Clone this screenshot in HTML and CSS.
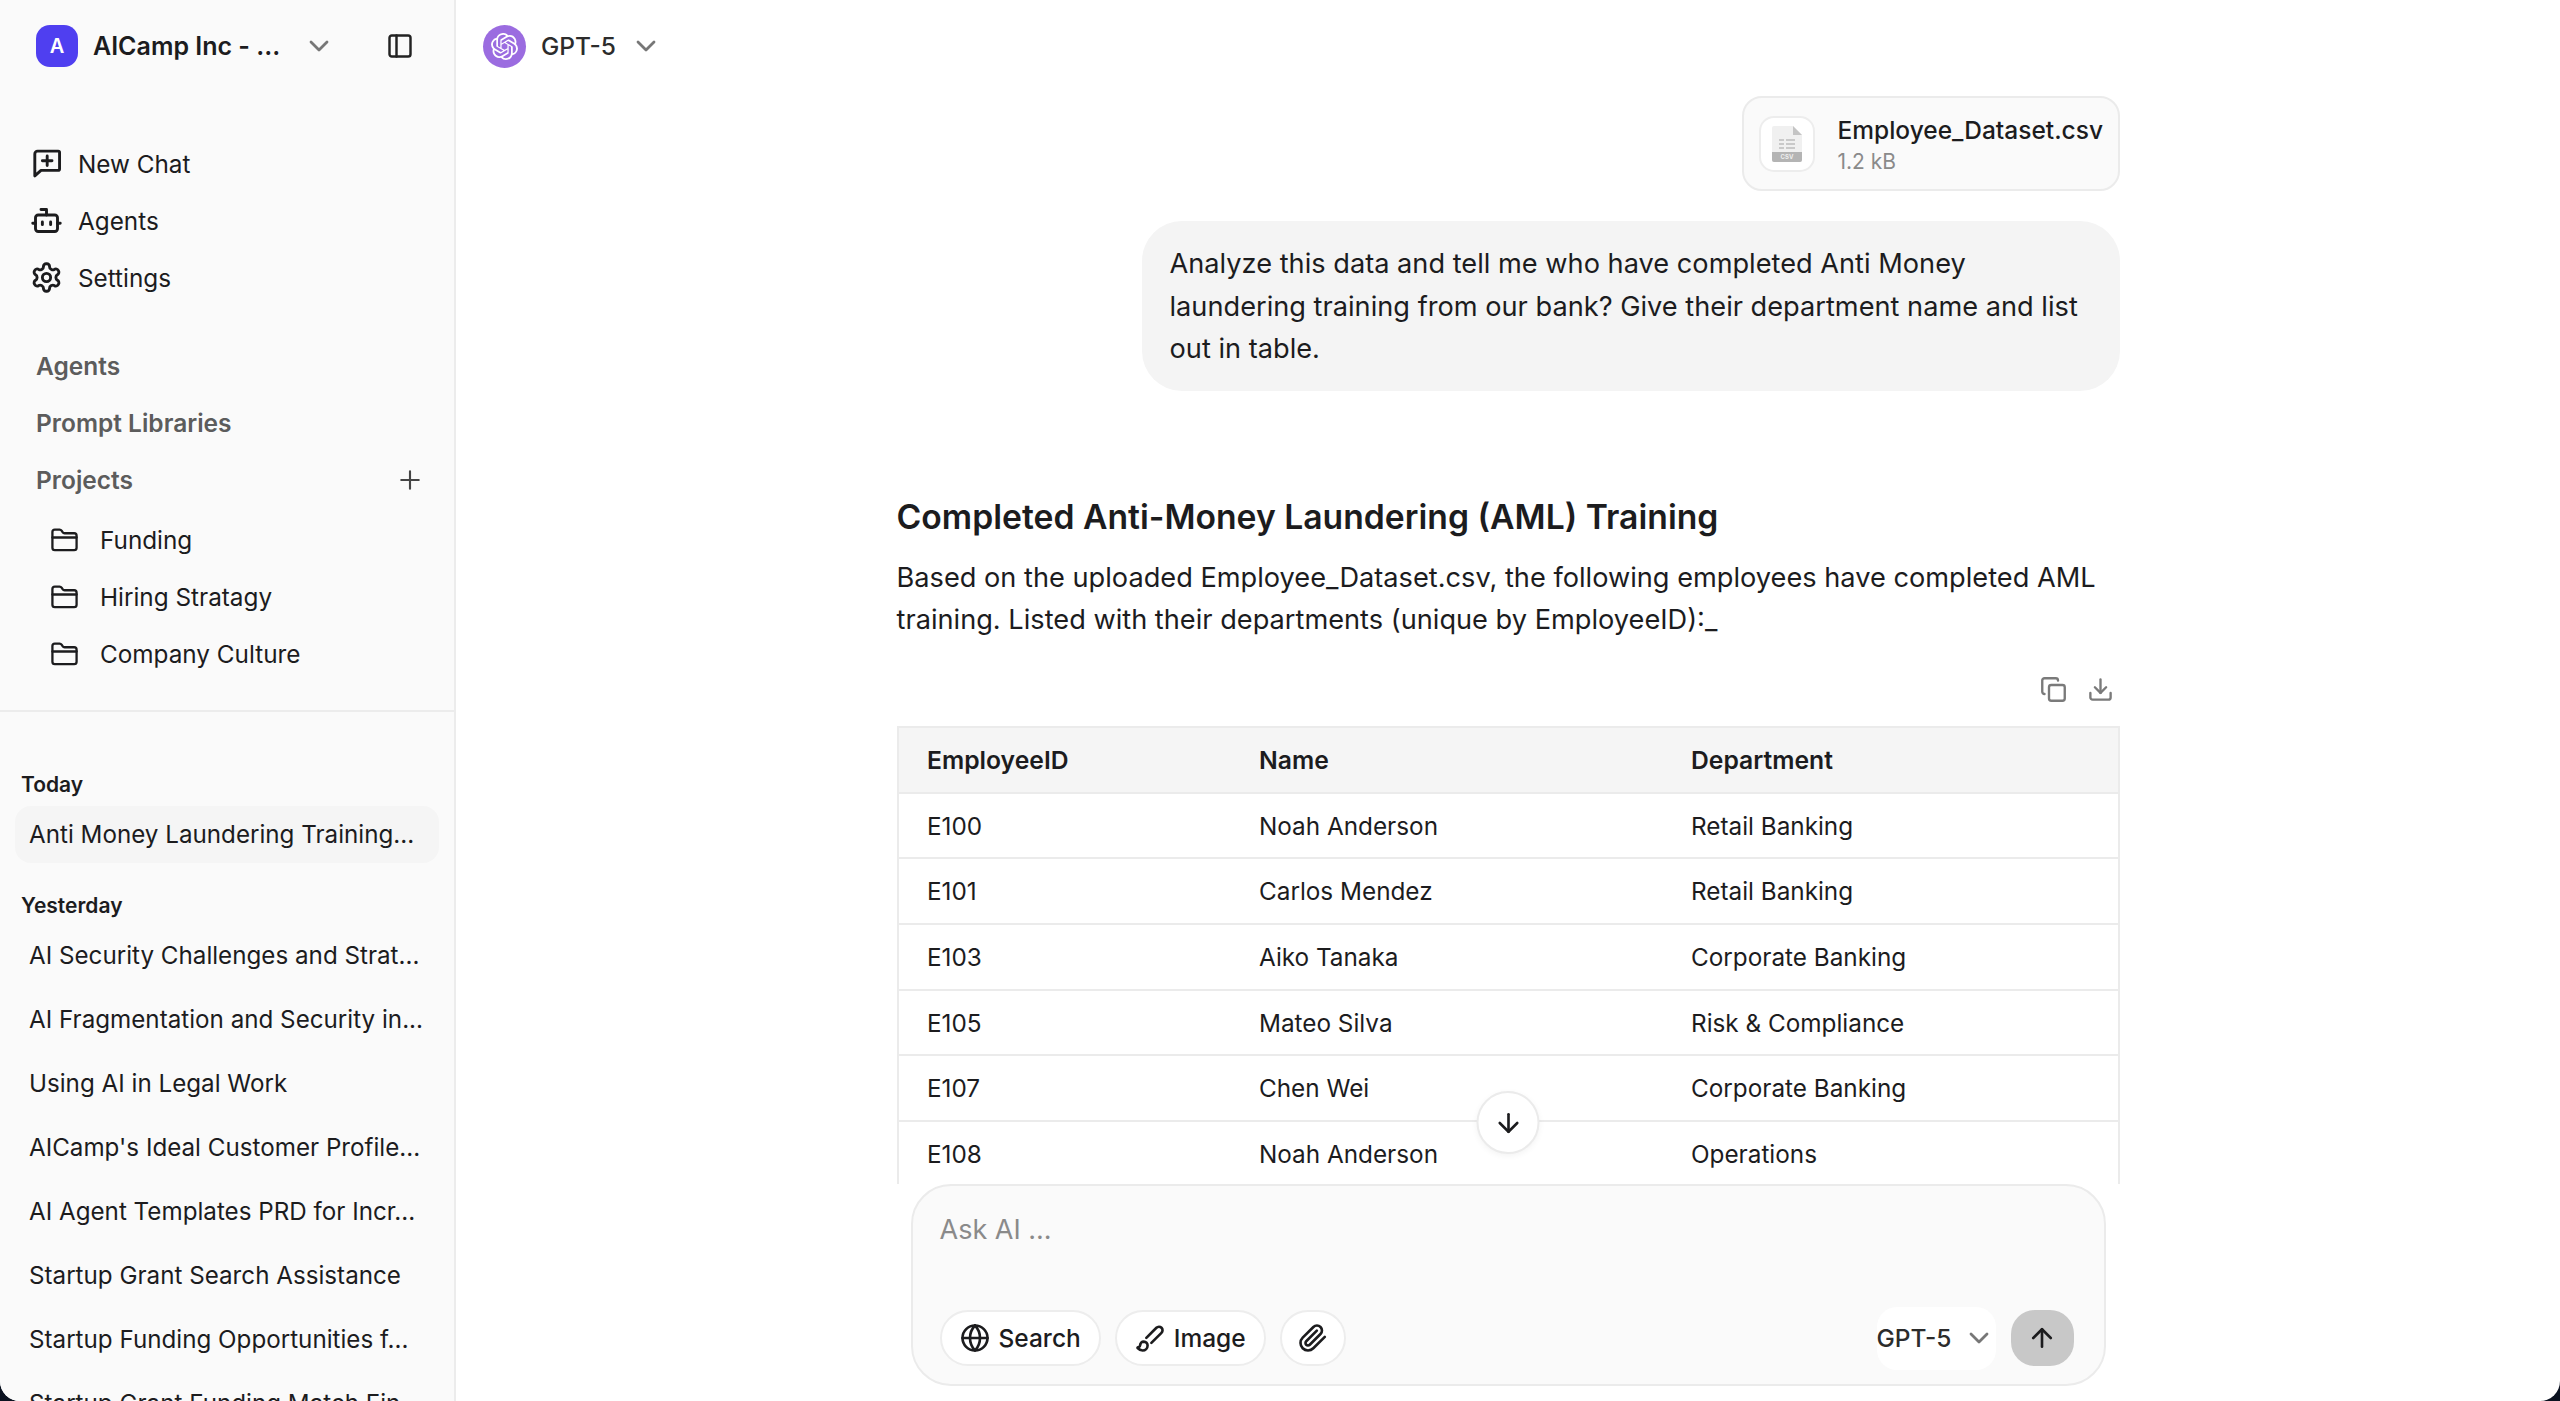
FILE: index.html
```html
<!DOCTYPE html>
<html lang="en">
<head>
  <meta charset="UTF-8">
  <meta name="viewport" content="width=device-width, initial-scale=1">
  <title>AICamp Chat</title>
  <link rel="stylesheet" href="styles.css">
</head>
<body>
  <svg class="sprite" xmlns="http://www.w3.org/2000/svg">
    <symbol id="i-chevron" viewBox="0 0 24 24"><path d="m6 9 6 6 6-6"/></symbol>
    <symbol id="i-panel" viewBox="0 0 24 24"><rect x="3" y="3" width="18" height="18" rx="2"/><path d="M9 3v18"/></symbol>
    <symbol id="i-chat" viewBox="0 0 24 24"><path d="M3.5 21V5a2 2 0 0 1 2-2h15a1 1 0 0 1 1 1v12a1 1 0 0 1-1 1H8z"/><path d="M12.5 6.5v7M9 10h7"/></symbol>
    <symbol id="i-bot" viewBox="0 0 24 24"><path d="M12 8V4H8"/><rect x="4" y="8" width="16" height="12" rx="2"/><path d="M2 14h2M20 14h2M15 13v2M9 13v2"/></symbol>
    <symbol id="i-gear" viewBox="0 0 24 24"><path d="M12.22 2h-.44a2 2 0 0 0-2 2v.18a2 2 0 0 1-1 1.73l-.43.25a2 2 0 0 1-2 0l-.15-.08a2 2 0 0 0-2.73.73l-.22.38a2 2 0 0 0 .73 2.73l.15.1a2 2 0 0 1 1 1.72v.51a2 2 0 0 1-1 1.74l-.15.09a2 2 0 0 0-.73 2.73l.22.38a2 2 0 0 0 2.73.73l.15-.08a2 2 0 0 1 2 0l.43.25a2 2 0 0 1 1 1.73V20a2 2 0 0 0 2 2h.44a2 2 0 0 0 2-2v-.18a2 2 0 0 1 1-1.73l.43-.25a2 2 0 0 1 2 0l.15.08a2 2 0 0 0 2.73-.73l.22-.39a2 2 0 0 0-.73-2.73l-.15-.08a2 2 0 0 1-1-1.74v-.5a2 2 0 0 1 1-1.74l.15-.09a2 2 0 0 0 .73-2.73l-.22-.38a2 2 0 0 0-2.73-.73l-.15.08a2 2 0 0 1-2 0l-.43-.25a2 2 0 0 1-1-1.73V4a2 2 0 0 0-2-2z"/><circle cx="12" cy="12" r="3"/></symbol>
    <symbol id="i-plus" viewBox="0 0 24 24"><path d="M5 12h14M12 5v14"/></symbol>
    <symbol id="i-folder" viewBox="0 0 24 24"><path d="M20 20a2 2 0 0 0 2-2V8a2 2 0 0 0-2-2h-7.9a2 2 0 0 1-1.69-.9L9.6 3.9A2 2 0 0 0 7.93 3H4a2 2 0 0 0-2 2v13a2 2 0 0 0 2 2Z"/><path d="M2 9.5h20"/></symbol>
    <symbol id="i-copy" viewBox="0 0 24 24"><rect x="8" y="8" width="14" height="14" rx="2"/><path d="M4 16c-1.1 0-2-.9-2-2V4c0-1.1.9-2 2-2h10c1.1 0 2 .9 2 2"/></symbol>
    <symbol id="i-download" viewBox="0 0 24 24"><path d="M21 15v4a2 2 0 0 1-2 2H5a2 2 0 0 1-2-2v-4"/><path d="m7 10 5 5 5-5"/><path d="M12 15V3"/></symbol>
    <symbol id="i-down" viewBox="0 0 24 24"><path d="M12 5v14"/><path d="m19 12-7 7-7-7"/></symbol>
    <symbol id="i-up" viewBox="0 0 24 24"><path d="m5 12 7-7 7 7"/><path d="M12 19V5"/></symbol>
    <symbol id="i-globe" viewBox="0 0 24 24"><circle cx="12" cy="12" r="10"/><path d="M12 2a14.5 14.5 0 0 0 0 20 14.5 14.5 0 0 0 0-20"/><path d="M2 12h20"/></symbol>
    <symbol id="i-brush" viewBox="0 0 24 24"><path d="m9.06 11.9 8.07-8.06a2.85 2.85 0 1 1 4.03 4.03l-8.06 8.08"/><path d="M7.07 14.94c-1.66 0-3 1.35-3 3.02 0 1.33-2.5 1.52-2 2.02 1.08 1.1 2.49 2.02 4 2.02 2.2 0 4-1.8 4-4.04a3.01 3.01 0 0 0-3-3.02z"/></symbol>
    <symbol id="i-clip" viewBox="0 0 24 24"><path d="m21.44 11.05-9.19 9.19a6 6 0 0 1-8.49-8.49l8.57-8.57A4 4 0 1 1 18 8.84l-8.59 8.57a2 2 0 0 1-2.83-2.83l8.49-8.48"/></symbol>
  </svg>

  <div class="app">
    <aside class="sidebar">
      <div class="workspace">
        <span class="avatar">A</span>
        <span class="workspace-name">AICamp Inc - ...</span>
        <svg class="icon chevron"><use href="#i-chevron"/></svg>
        <svg class="icon panel-toggle"><use href="#i-panel"/></svg>
      </div>

      <nav class="nav">
        <a class="nav-item"><svg class="icon nav-icon"><use href="#i-chat"/></svg>New Chat</a>
        <a class="nav-item"><svg class="icon nav-icon"><use href="#i-bot"/></svg>Agents</a>
        <a class="nav-item"><svg class="icon nav-icon"><use href="#i-gear"/></svg>Settings</a>
      </nav>

      <div class="sections">
        <div class="section-link">Agents</div>
        <div class="section-link">Prompt Libraries</div>
        <div class="section-link">Projects<svg class="icon add-project"><use href="#i-plus"/></svg></div>
        <a class="project"><svg class="icon folder"><use href="#i-folder"/></svg>Funding</a>
        <a class="project"><svg class="icon folder"><use href="#i-folder"/></svg>Hiring Stratagy</a>
        <a class="project"><svg class="icon folder"><use href="#i-folder"/></svg>Company Culture</a>
      </div>

      <div class="history">
        <div class="history-label">Today</div>
        <a class="history-item active">Anti Money Laundering Training...</a>
        <div class="history-label">Yesterday</div>
        <a class="history-item">AI Security Challenges and Strat...</a>
        <a class="history-item">AI Fragmentation and Security in...</a>
        <a class="history-item">Using AI in Legal Work</a>
        <a class="history-item">AICamp's Ideal Customer Profile...</a>
        <a class="history-item">AI Agent Templates PRD for Incr...</a>
        <a class="history-item">Startup Grant Search Assistance</a>
        <a class="history-item">Startup Funding Opportunities f...</a>
        <a class="history-item">Startup Grant Funding Match Fin...</a>
      </div>
    </aside>

    <main class="main">
      <header class="topbar">
        <span class="model-badge">
          <svg viewBox="0 0 24 24"><path d="M22.2819 9.8211a5.9847 5.9847 0 0 0-.5157-4.9108 6.0462 6.0462 0 0 0-6.5098-2.9A6.0651 6.0651 0 0 0 4.9807 4.1818a5.9847 5.9847 0 0 0-3.9977 2.9 6.0462 6.0462 0 0 0 .7427 7.0966 5.98 5.98 0 0 0 .511 4.9107 6.051 6.051 0 0 0 6.5146 2.9001A5.9847 5.9847 0 0 0 13.2599 24a6.0557 6.0557 0 0 0 5.7718-4.2058 5.9894 5.9894 0 0 0 3.9977-2.9001 6.0557 6.0557 0 0 0-.7475-7.0729zm-9.022 12.6081a4.4755 4.4755 0 0 1-2.8764-1.0408l.1419-.0804 4.7783-2.7582a.7948.7948 0 0 0 .3927-.6813v-6.7369l2.02 1.1686a.071.071 0 0 1 .038.052v5.5826a4.504 4.504 0 0 1-4.4945 4.4944zm-9.6607-4.1254a4.4708 4.4708 0 0 1-.5346-3.0137l.142.0852 4.783 2.7582a.7712.7712 0 0 0 .7806 0l5.8428-3.3685v2.3324a.0804.0804 0 0 1-.0332.0615L9.74 19.9502a4.4992 4.4992 0 0 1-6.1408-1.6464zM2.3408 7.8956a4.485 4.485 0 0 1 2.3655-1.9728V11.6a.7664.7664 0 0 0 .3879.6765l5.8144 3.3543-2.0201 1.1685a.0757.0757 0 0 1-.071 0l-4.8303-2.7865A4.504 4.504 0 0 1 2.3408 7.872zm16.5963 3.8558L13.1038 8.364 15.1192 7.2a.0757.0757 0 0 1 .071 0l4.8303 2.7913a4.4944 4.4944 0 0 1-.6765 8.1042v-5.6772a.79.79 0 0 0-.407-.667zm2.0107-3.0231l-.142-.0852-4.7735-2.7818a.7759.7759 0 0 0-.7854 0L9.409 9.2297V6.8974a.0662.0662 0 0 1 .0284-.0615l4.8303-2.7866a4.4992 4.4992 0 0 1 6.6802 4.66zM8.3065 12.863l-2.02-1.1638a.0804.0804 0 0 1-.038-.0567V6.0742a4.4992 4.4992 0 0 1 7.3757-3.4537l-.142.0805L8.704 5.459a.7948.7948 0 0 0-.3927.6813zm1.0976-2.3654l2.602-1.4998 2.6069 1.4998v2.9994l-2.5974 1.4997-2.6067-1.4997Z"/></svg>
        </span>
        <span class="model-name">GPT-5</span>
        <svg class="icon chevron"><use href="#i-chevron"/></svg>
      </header>

      <div class="thread">
        <div class="thread-inner">
          <div class="file-card">
            <span class="file-thumb">
              <svg viewBox="0 0 30 36">
                <path class="doc" d="M2 0h19l9 9v25a2 2 0 0 1-2 2H2a2 2 0 0 1-2-2V2a2 2 0 0 1 2-2z"/>
                <path class="doc-fold" d="M21 0l9 9h-9z"/>
                <path class="doc-lines" d="M7 13h5v2H7zM14 13h9v2h-9zM7 17h5v2H7zM14 17h9v2h-9zM7 21h5v2H7zM14 21h9v2h-9z"/>
                <path class="doc-bar" d="M0 26h30v8a2 2 0 0 1-2 2H2a2 2 0 0 1-2-2z"/>
                <text class="doc-label" x="15" y="33">CSV</text>
              </svg>
            </span>
            <div class="file-meta">
              <div class="file-name">Employee_Dataset.csv</div>
              <div class="file-size">1.2 kB</div>
            </div>
          </div>

          <div class="bubble">Analyze this data and tell me who have completed Anti Money laundering training from our bank? Give their department name and list out in table.</div>

          <h2 class="answer-title">Completed Anti-Money Laundering (AML) Training</h2>
          <p class="answer-text">Based on the uploaded Employee_Dataset.csv, the following employees have completed AML training. Listed with their departments (unique by EmployeeID):_</p>

          <div class="table-actions">
            <svg class="icon action"><use href="#i-copy"/></svg>
            <svg class="icon action"><use href="#i-download"/></svg>
          </div>

          <table class="result-table">
            <thead>
              <tr><th class="col-id">EmployeeID</th><th class="col-name">Name</th><th>Department</th></tr>
            </thead>
            <tbody>
              <tr><td>E100</td><td>Noah Anderson</td><td>Retail Banking</td></tr>
              <tr><td>E101</td><td>Carlos Mendez</td><td>Retail Banking</td></tr>
              <tr><td>E103</td><td>Aiko Tanaka</td><td>Corporate Banking</td></tr>
              <tr><td>E105</td><td>Mateo Silva</td><td>Risk &amp; Compliance</td></tr>
              <tr><td>E107</td><td>Chen Wei</td><td>Corporate Banking</td></tr>
              <tr><td>E108</td><td>Noah Anderson</td><td>Operations</td></tr>
            </tbody>
          </table>
        </div>
        <button class="scroll-down"><svg class="icon"><use href="#i-down"/></svg></button>
      </div>

      <div class="composer">
        <div class="placeholder">Ask AI ...</div>
        <div class="composer-bar">
          <button class="pill"><svg class="icon"><use href="#i-globe"/></svg>Search</button>
          <button class="pill"><svg class="icon"><use href="#i-brush"/></svg>Image</button>
          <button class="pill pill-round"><svg class="icon"><use href="#i-clip"/></svg></button>
          <div class="model-select">GPT-5<svg class="icon chevron"><use href="#i-chevron"/></svg></div>
          <button class="send"><svg class="icon"><use href="#i-up"/></svg></button>
        </div>
      </div>
    </main>
  </div>
</body>
</html>
```

FILE: styles.css
```css
* {
  box-sizing: border-box;
}
body {
  margin: 0;
  height: 100vh;
  overflow: hidden;
  background-color: #0b1220;
  font-family: Inter, "Noto Sans", sans-serif;
  color: #1c1c1e;
}
button {
  font: inherit;
  color: inherit;
  cursor: pointer;
}
.sprite {
  display: none;
}
.icon {
  width: 30px;
  height: 30px;
  flex: none;
  fill: none;
  stroke: currentColor;
  stroke-width: 2.1;
  stroke-linecap: round;
  stroke-linejoin: round;
}
.chevron {
  width: 32px;
  height: 32px;
  color: #777;
}
.app {
  display: flex;
  height: 100%;
  background: #fff;
  border-radius: 0 0 20px 20px;
  overflow: hidden;
}

/* sidebar */
.sidebar {
  width: 456px;
  flex: none;
  background: #fafafa;
  border-right: 2px solid #ececec;
  overflow: hidden;
}
.workspace {
  display: flex;
  align-items: center;
  height: 92px;
  padding-left: 36px;
}
.avatar {
  width: 42px;
  height: 42px;
  border-radius: 14px;
  background: #4f3ff0;
  color: #fff;
  font-size: 20px;
  font-weight: 600;
  display: flex;
  align-items: center;
  justify-content: center;
}
.workspace-name {
  width: 211px;
  margin-left: 15px;
  font-size: 25px;
  font-weight: 600;
  white-space: nowrap;
}
.workspace .chevron {
  margin-left: -1px;
}
.panel-toggle {
  width: 28px;
  height: 28px;
  margin-left: 51px;
  color: #222;
}
.nav {
  margin-top: 43px;
  padding-left: 30px;
}
.nav-item {
  display: flex;
  align-items: center;
  gap: 15px;
  height: 57px;
  font-size: 24.3px;
}
.nav-icon {
  width: 33px;
  height: 33px;
  stroke-width: 2.1;
}
.sections {
  margin-top: 31.5px;
  padding: 0 32px 27.5px 36px;
  border-bottom: 2px solid #ececec;
}
.section-link {
  display: flex;
  align-items: center;
  justify-content: space-between;
  height: 57px;
  font-size: 24.5px;
  font-weight: 600;
  color: #5c5c5c;
}
.add-project {
  color: #444;
  width: 30px;
  height: 30px;
  stroke-width: 1.7;
  margin-right: -3px;
}
.project {
  display: flex;
  align-items: center;
  gap: 21px;
  height: 57px;
  padding-left: 14px;
  font-size: 24.3px;
}
.project:first-of-type {
  margin-top: 3px;
}
.folder {
  width: 29px;
  height: 29px;
  stroke-width: 1.9;
}
.history {
  padding: 0 15px;
}
.history-label {
  display: flex;
  align-items: center;
  height: 36px;
  padding-left: 6px;
  font-size: 21px;
  font-weight: 600;
  margin-top: 54px;
  margin-bottom: 4px;
}
.history-label + .history-item {
  margin-top: 0;
}
.history-item {
  display: flex;
  align-items: center;
  height: 57px;
  margin-top: 7px;
  padding-left: 14px;
  border-radius: 16px;
  font-size: 24.2px;
  white-space: nowrap;
}
.history-item.active {
  background: #f5f5f5;
}
.history-item.active + .history-label {
  margin-top: 24px;
}

/* main column */
.main {
  flex: 1;
  min-width: 0;
  display: flex;
  flex-direction: column;
  padding-bottom: 15px;
}
.topbar {
  display: flex;
  align-items: center;
  height: 92px;
  flex: none;
  padding-left: 27px;
}
.model-badge {
  width: 43px;
  height: 43px;
  border-radius: 50%;
  background: #9b6ce0;
  display: flex;
  align-items: center;
  justify-content: center;
}
.model-badge svg {
  width: 27px;
  height: 27px;
  fill: #fff;
}
.model-name {
  margin-left: 15px;
  margin-right: 14px;
  font-size: 24.5px;
  font-weight: 500;
  color: #2c2c2c;
}
.thread {
  flex: 1;
  min-height: 0;
  position: relative;
  overflow: hidden;
}
.thread-inner {
  width: 1223px;
  margin: 0 auto;
  padding-top: 4px;
}
.file-card {
  display: flex;
  align-items: center;
  gap: 23px;
  width: 378px;
  height: 95px;
  margin-left: auto;
  padding-left: 15px;
  background: #fafafa;
  border: 2px solid #ebebeb;
  border-radius: 20px;
}
.file-thumb {
  width: 56px;
  height: 56px;
  background: #fff;
  border: 2px solid #ededed;
  border-radius: 15px;
  display: flex;
  align-items: center;
  justify-content: center;
}
.file-thumb svg {
  width: 30px;
  height: 36px;
}
.doc {
  fill: #f0f0f0;
}
.doc-fold {
  fill: #c4c4c4;
}
.doc-lines {
  fill: #c9c9c9;
}
.doc-bar {
  fill: #b4b4b4;
}
.doc-label {
  fill: #eee;
  font-size: 6px;
  font-weight: 700;
  text-anchor: middle;
}
.file-meta {
  padding-top: 2px;
}
.file-name {
  font-size: 24.5px;
  font-weight: 500;
  line-height: 34px;
}
.file-size {
  font-size: 21px;
  line-height: 30px;
  color: #8a8a8a;
}
.bubble {
  width: 978px;
  margin: 30px 0 0 auto;
  padding: 22px 28px 20px;
  background: #f4f4f4;
  border-radius: 40px;
  font-size: 27.2px;
  line-height: 42.6px;
}
.answer-title {
  margin: 101px 0 0;
  font-size: 33.7px;
  font-weight: 600;
  line-height: 50px;
}
.answer-text {
  margin: 15px 0 0;
  font-size: 27.2px;
  line-height: 42.6px;
}
.table-actions {
  display: flex;
  justify-content: flex-end;
  gap: 20px;
  margin-top: 34px;
  height: 50px;
  padding-right: 6px;
  color: #7a7a7a;
}
.action {
  width: 27px;
  height: 27px;
}
.result-table {
  width: 100%;
  table-layout: fixed;
  border-collapse: collapse;
  font-size: 24.3px;
}
.result-table th,
.result-table td {
  height: 65.7px;
  padding: 0 28.5px;
  text-align: left;
  border: 2px solid #ebebeb;
  border-left-width: 0;
  border-right-width: 0;
}
.result-table th {
  background: #f5f5f5;
  font-size: 24.7px;
  font-weight: 600;
}
.result-table th:first-child,
.result-table td:first-child {
  border-left-width: 2px;
}
.result-table th:last-child,
.result-table td:last-child {
  border-right-width: 2px;
}
.col-id {
  width: 333px;
}
.col-name {
  width: 432px;
}
.scroll-down {
  position: absolute;
  left: 50%;
  bottom: 30px;
  transform: translateX(-50%);
  width: 63px;
  height: 63px;
  border-radius: 50%;
  background: #fff;
  border: 2px solid #ebebeb;
  box-shadow: 0 2px 6px rgba(0,0,0,0.05);
  display: flex;
  align-items: center;
  justify-content: center;
  padding: 0;
}

/* composer */
.composer {
  flex: none;
  width: 1195px;
  height: 202px;
  margin: 0 auto;
  padding: 26px 30px 18px 27px;
  display: flex;
  flex-direction: column;
  justify-content: space-between;
  background: #fafafa;
  border: 2px solid #ebebeb;
  border-radius: 40px;
}
.placeholder {
  font-size: 27px;
  line-height: 36px;
  color: #8a8a8a;
}
.composer-bar {
  display: flex;
  align-items: center;
  height: 56px;
}
.pill {
  display: flex;
  align-items: center;
  gap: 9px;
  height: 56px;
  padding: 0 18px;
  margin-right: 14px;
  background: #fff;
  border: 2px solid #ededed;
  border-radius: 28px;
  font-size: 24.5px;
  font-weight: 500;
}
.pill .icon {
  width: 30px;
  height: 30px;
}
.pill-round {
  width: 66px;
  padding: 0;
  justify-content: center;
}
.model-select {
  display: flex;
  align-items: center;
  gap: 12px;
  width: 119px;
  height: 63px;
  margin-left: auto;
  background: #fff;
  border-radius: 20px;
  font-size: 24.5px;
  font-weight: 500;
  color: #2c2c2c;
}
.send {
  width: 63px;
  height: 56px;
  margin-left: 15px;
  border: none;
  border-radius: 24px;
  background: #c8c8c8;
  display: flex;
  align-items: center;
  justify-content: center;
  padding: 0;
}
.send .icon {
  width: 30px;
  height: 30px;
}
```
